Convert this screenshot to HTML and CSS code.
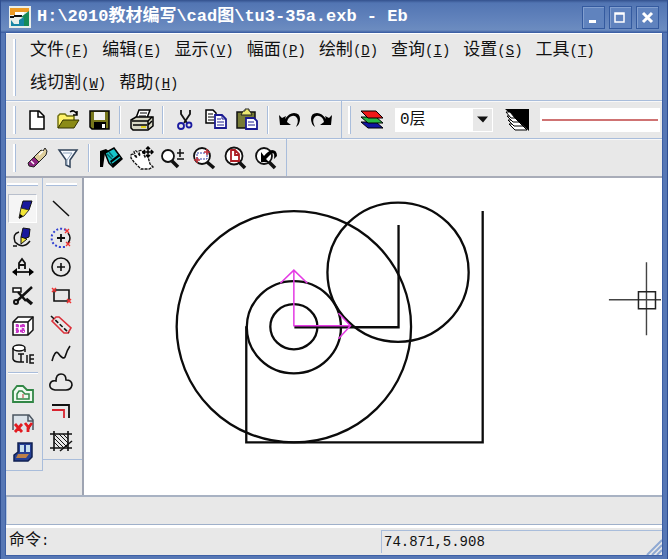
FILE: index.html
```html
<!DOCTYPE html>
<html lang="zh-CN">
<head>
<meta charset="utf-8">
<meta name="viewport" content="width=device-width, initial-scale=1">
<title>H:\2010教材编写\cad图\tu3-35a.exb - Eb</title>
<link rel="stylesheet" href="styles.css">
</head>
<body>
<div class="window">
  <header class="titlebar">
    <svg class="app-icon" viewBox="0 0 22 22" aria-hidden="true"><path fill="#e9eee9" d="M0 0h22v22H0z"/><path fill="#ed9b25" d="M1 2h19v4H6v3H1z"/><path fill="#fff" d="M6 6h9v4H6z"/><path fill="#111" d="M1 10h4v-1h8v2H5v1H1z"/><path fill="#1685a5" d="M2 14l3 4h5v-4l5-3v9H2z"/><path fill="#178b58" d="M12 11l8-6v15h-5v-8z"/></svg>
    <h1>H:\2010教材编写\cad图\tu3-35a.exb - Eb</h1>
    <div class="window-controls">
      <button type="button" aria-label="最小化"><svg viewBox="0 0 20 20"><path d="M6 13h7v3H6z" fill="#fff"/></svg></button>
      <button type="button" aria-label="最大化"><svg viewBox="0 0 20 20"><path d="M5 6h9v9H5zM5 7h9" fill="none" stroke="#fff" stroke-width="1.500"/></svg></button>
      <button type="button" aria-label="关闭"><svg viewBox="0 0 20 20"><path d="M6 6l9 9M15 6l-9 9" stroke="#fff" stroke-width="3"/></svg></button>
    </div>
  </header>

  <div class="content">
    <nav class="menubar" aria-label="菜单">
      <span class="grip"></span>
      <div class="menu-items">
        <button type="button">文件<span class="key">(<u>F</u>)</span></button>
        <button type="button">编辑<span class="key">(<u>E</u>)</span></button>
        <button type="button">显示<span class="key">(<u>V</u>)</span></button>
        <button type="button">幅面<span class="key">(<u>P</u>)</span></button>
        <button type="button">绘制<span class="key">(<u>D</u>)</span></button>
        <button type="button">查询<span class="key">(<u>I</u>)</span></button>
        <button type="button">设置<span class="key">(<u>S</u>)</span></button>
        <button type="button">工具<span class="key">(<u>T</u>)</span></button>
        <button type="button">线切割<span class="key">(<u>W</u>)</span></button>
        <button type="button">帮助<span class="key">(<u>H</u>)</span></button>
      </div>
    </nav>

    <div class="toolbar-row">
      <div class="toolbar">
        <span class="grip"></span>
        <button type="button" aria-label="新建"><svg viewBox="0 0 24 24"><path d="M5 3h9l5 5v13H5z" fill="#fff" stroke="#000" stroke-width="1.500"/><path d="M13 3v6h6" fill="none" stroke="#000" stroke-width="1.500"/></svg></button>
        <button type="button" aria-label="打开"><svg viewBox="0 0 24 24"><path d="M2 20V8l2-2h5l2 2h7v4" fill="#fff36a" stroke="#6e6e10" stroke-width="1.500"/><path d="M2 20l5-8h16l-5 8z" fill="#8b8b16" stroke="#333300"/><path d="M14 4q4-3 7 2M21 3v4h-4" fill="none" stroke="#000" stroke-width="1.500"/></svg></button>
        <button type="button" aria-label="保存"><svg viewBox="0 0 24 24"><path d="M3 3h19v18H5l-2-2z" fill="#77771c" stroke="#000" stroke-width="1.500"/><path d="M7 4h11v8H7z" fill="#f1f1f1"/><path d="M7 14h12v7H7z" fill="#000"/><path d="M15 16h3v4h-3z" fill="#fff"/></svg></button>
        <span class="separator"></span>
        <button type="button" aria-label="打印"><svg viewBox="0 0 24 24"><path d="M6 10l3-8h11l-3 8z" fill="#fff" stroke="#000" stroke-width="1.500"/><path d="M10 5h7M9 8h7" stroke="#000"/><path d="M1 12l5-3h17v9l-5 4H3l-2-2z" fill="#d6d6c4" stroke="#000" stroke-width="1.500"/><path d="M2 13h16v8M3 17h14M18 13l4-4M18 17l4-4" fill="none" stroke="#000" stroke-width="1.500"/><path d="M11 18h5v2h-5z" fill="#e0d020"/></svg></button>
        <span class="separator"></span>
        <button type="button" aria-label="剪切"><svg viewBox="0 0 24 24"><path d="M8 2v4l6 9M17 2v4l-6 9" fill="none" stroke="#111" stroke-width="1.800"/><circle cx="8" cy="18" r="3" fill="none" stroke="#1b1ba0" stroke-width="1.800"/><circle cx="16" cy="17" r="2.500" fill="none" stroke="#1b1ba0" stroke-width="1.800"/></svg></button>
        <button type="button" aria-label="复制"><svg viewBox="0 0 24 24"><path d="M2 2h7l3 3v10H2z" fill="#fff" stroke="#000" stroke-width="1.500"/><path d="M4 6h5M4 9h6M4 12h6" stroke="#000"/><path d="M11 7h7l4 4v9H11z" fill="#fff" stroke="#1a1a91" stroke-width="1.800"/><path d="M18 7v4h4M13 11h4M13 14h7M13 17h7" fill="none" stroke="#1a1a91"/></svg></button>
        <button type="button" aria-label="粘贴"><svg viewBox="0 0 24 24"><path d="M2 4h18v16H2z" fill="#777b36" stroke="#111" stroke-width="1.500"/><path d="M6 7l2-4h2V1h4v2h1l2 4z" fill="#ece973" stroke="#222"/><path d="M11 10h8l3 3v8H11z" fill="#fff" stroke="#1a1a91" stroke-width="1.800"/><path d="M13 14h6M13 17h7" stroke="#1a1a91"/></svg></button>
        <span class="separator"></span>
        <button type="button" aria-label="撤销"><svg viewBox="0 0 24 24"><path d="M1 7l3 3 4-2-1 3q4-6 9-6 6 0 6 6 0 5-4 8 3-6 1-9-2-3-5-2-4 1-5 6l4 3H2z"/></svg></button>
        <button type="button" aria-label="重做"><svg viewBox="0 0 24 24"><path d="M23 7l-3 3-4-2 1 3q-4-6-9-6-6 0-6 6 0 5 4 8-3-6-1-9 2-3 5-2 4 1 5 6l-4 3h11z"/></svg></button>
      </div>
      <div class="toolbar toolbar-layer">
        <span class="grip"></span>
        <button type="button" aria-label="层控制"><svg viewBox="0 0 24 24"><path d="M1 14h15l7 6H8z" fill="#1115a0" stroke="#000"/><path d="M1 9h15l7 6H8z" fill="#28b944" stroke="#000"/><path d="M1 3h15l7 7H8z" fill="#ef1919" stroke="#000"/></svg></button>
        <div class="layer-picker"><select aria-label="图层"><option>0层</option></select></div>
        <button type="button" class="linetype-button" aria-label="线型设置"><svg viewBox="0 0 24 24"><path d="M0 1h24v22z"/><g fill="#fff" stroke="#000"><path d="M4 16h12l6 6H10z"/><path d="M3 12h9l6 6H9z"/><path d="M2 8h6l6 6H8z"/><path d="M1 4h4l5 6H6z"/></g></svg></button>
        <button type="button" class="line-sample" aria-label="当前线型"><span></span></button>
      </div>
    </div>

    <div class="toolbar-row view-row">
      <div class="toolbar">
        <span class="grip"></span>
        <button type="button" aria-label="擦除"><svg viewBox="0 0 24 24"><path d="M9 11l7-7 2 1 2-3 2 3-1 4-7 7z" fill="#dfcf9c" stroke="#222"/><path d="M9 11l5 5-5 5-5-1-1-3z" fill="#8b247f" stroke="#222"/><path d="M6 15l3 3M14 9l4-4" stroke="#fff" stroke-width="1.500"/></svg></button>
        <button type="button" aria-label="过滤"><svg viewBox="0 0 24 24"><path d="M3 4h18l-7 10v7l-4-2v-5z" fill="#f7faff" stroke="#31435a" stroke-width="1.500"/><path d="M7 7h9l-5 7v5" fill="none" stroke="#8da3bc"/></svg></button>
        <span class="separator"></span>
        <button type="button" aria-label="重画"><svg viewBox="0 0 24 24"><path d="M1 5l6-2 4 3-5 1-2 14H1z"/><path d="M6 7l9-5 8 11-9 8-4-4z" fill="#16c5ca" stroke="#000" stroke-width="1.500"/><path d="M11 15l9-7 3 5-9 8z"/><path d="M13 17l8-6" stroke="#16c5ca" stroke-width="1.500"/><path d="M10 6l4 5M8 8l5 5" stroke="#05646a" stroke-width="1.500"/></svg></button>
        <button type="button" aria-label="平移"><svg viewBox="0 0 24 24"><path d="M1 9q2-2 4 1l2 2-3-6q1-3 4 1l2 3-1-5q3-2 4 2l2 4q2-3 3 0l2 7 3 3-4 2H11l-7-7-3-4z" fill="#fff" stroke="#111" stroke-width="1.300" stroke-dasharray="3 1"/><path d="M18 1v10M13 6h10M16 3l2-2 2 2M16 9l2 2 2-2M15 4l-2 2 2 2M21 4l2 2-2 2" fill="none" stroke="#000" stroke-width="1.500"/></svg></button>
        <button type="button" aria-label="缩放"><svg viewBox="0 0 24 24"><circle cx="7" cy="10" r="6" fill="#fff" stroke="#111" stroke-width="1.800"/><path d="M11 15l6 6" stroke="#111" stroke-width="3.500"/><path d="M16 7h7M19 3v8M16 13h7" stroke="#111" stroke-width="1.500"/></svg></button>
        <button type="button" aria-label="窗口缩放"><svg viewBox="0 0 24 24"><circle cx="10" cy="10" r="8" fill="#fff" stroke="#111" stroke-width="1.800"/><path d="M15 16l7 6" stroke="#111" stroke-width="3.500"/><path d="M5 13V7h10v6z" fill="none" stroke="#3544a9" stroke-dasharray="2 1"/><path d="M12 6h6M15 3v6M2 14h6M5 11v6" stroke="#c3353e" stroke-width="1.500"/></svg></button>
        <button type="button" aria-label="页面缩放"><svg viewBox="0 0 24 24"><circle cx="11" cy="10" r="8.500" fill="#fff" stroke="#111" stroke-width="1.800"/><path d="M16 16l6 6" stroke="#111" stroke-width="3.500"/><path d="M8 4h4l4 4v7H8zM12 4v5h4" fill="none" stroke="#ad1e25" stroke-width="1.800"/></svg></button>
        <button type="button" aria-label="恢复视图"><svg viewBox="0 0 24 24"><circle cx="10" cy="10" r="8" fill="#fff" stroke="#111" stroke-width="1.800"/><path d="M15 16l6 6" stroke="#111" stroke-width="3.500"/><path d="M7 6v10h8l-3-3 6-6q3-1 2 6l3-3q0-6-5-6-4 1-8 6z"/></svg></button>
      </div>
    </div>

    <main class="workspace">
      <aside class="tool-columns">
        <div class="tool-column">
          <span class="grip-h"></span>
          <button type="button" class="pressed" aria-label="基本曲线"><svg viewBox="0 0 24 24"><path d="M12 4h9l-3 9-8-2z" fill="#18189c" stroke="#111"/><path d="M10 11l8 2-5 6-5 2z" fill="#f2e634" stroke="#333"/><path d="M9 17l3 2-4 3z"/></svg></button>
          <button type="button" aria-label="高级曲线"><svg viewBox="0 0 24 24"><path d="M8 6q-7 2-4 10 8 8 15-1M2 20h4" fill="none" stroke="#111" stroke-width="1.500"/><path d="M12 2l7 1-1 8-6 2-2-2z" fill="#18189c" stroke="#111"/><path d="M10 11l6 2-6 5z" fill="#f2e634" stroke="#111"/></svg></button>
          <button type="button" aria-label="工程标注"><svg viewBox="0 0 24 24"><path d="M8 14V8l3-4 3 4v6M8 10h6" fill="none" stroke="#111" stroke-width="1.800"/><path d="M2 17h20" stroke="#111" stroke-width="1.800"/><path d="M1 17l5-4v8zM23 17l-5-4v8z"/></svg></button>
          <button type="button" aria-label="曲线编辑"><svg viewBox="0 0 24 24"><path d="M2 4h8v4H2z" fill="#fff" stroke="#111" stroke-width="1.500"/><path d="M7 8l8 9M21 3L6 17" stroke="#111" stroke-width="2.500"/><circle cx="5" cy="18" r="2" fill="none" stroke="#111" stroke-width="2"/><path d="M15 15l6 5" stroke="#111" stroke-width="3.500"/></svg></button>
          <button type="button" aria-label="块操作"><svg viewBox="0 0 24 24"><path d="M2 9l5-5h15v13l-5 5H2z" fill="#fff" stroke="#111" stroke-width="1.500"/><path d="M2 9h15v13M17 9l5-5" fill="none" stroke="#111" stroke-width="1.500"/><path d="M5 13h9M5 18h9M6 11v9M12 11v9" stroke="#ca38ca" stroke-width="2.500" stroke-dasharray="3 1"/></svg></button>
          <button type="button" aria-label="库操作"><svg viewBox="0 0 24 24"><ellipse cx="8" cy="6" rx="6" ry="3" fill="#fff" stroke="#111" stroke-width="1.500"/><path d="M2 6v11q1 3 6 3M14 7v3M7 12h6M10 12v8M7 20h6M16 13v8M23 13h-4v8h4M19 17h4" fill="none" stroke="#111" stroke-width="1.500"/></svg></button>
          <span class="separator-h"></span>
          <button type="button" aria-label="轨迹生成"><svg viewBox="0 0 24 24"><path d="M2 20V9l4-5h6l4 4h6v12z" fill="#effaf0" stroke="#328746" stroke-width="1.800"/><path d="M6 17v-5l2-3h3l3 3h4v5z" fill="none" stroke="#328746" stroke-width="1.500"/><path d="M12 12v4" stroke="#b33"/></svg></button>
          <button type="button" aria-label="代码生成"><svg viewBox="0 0 24 24"><path d="M2 4h16l4 5v10H2z" fill="#dbe3ea"/><path d="M2 19V4h16l4 5v10M17 4v6h5" fill="none" stroke="#4b5560" stroke-width="1.500"/><path d="M4 13l7 8M11 13l-7 8M14 12l4 5M21 12l-4 5v4" stroke="#e21b21" stroke-width="2.800"/></svg></button>
          <button type="button" aria-label="传输与后置"><svg viewBox="0 0 24 24"><path d="M7 3h14v14l-4 4H3v-6l4-3z" fill="#254096" stroke="#102051" stroke-width="1.500"/><path d="M9 5h4v7H9zM15 5h4v7h-4z" fill="#c7e0ed"/><path d="M7 14h11l-3 4H5z" fill="#bb8049"/></svg></button>
        </div>
        <div class="tool-column tool-column-draw">
          <span class="grip-h"></span>
          <button type="button" aria-label="直线"><svg viewBox="0 0 24 24"><path d="M4 4l16 15" stroke="#111" stroke-width="1.500"/></svg></button>
          <button type="button" aria-label="圆弧"><svg viewBox="0 0 24 24"><path d="M17 4Q8 0 3 9q-2 10 8 12h6" fill="none" stroke="#3140d1" stroke-width="2" stroke-dasharray="2 2"/><path d="M19 7q4 5 0 10" fill="none" stroke="#111" stroke-width="1.500"/><path d="M8 12h8M12 8v8" stroke="#111" stroke-width="1.800"/><path d="M16 3l4 4M20 3l-4 4M17 16l4 4M21 16l-4 4" stroke="#e33" stroke-width="1.300"/></svg></button>
          <button type="button" aria-label="圆"><svg viewBox="0 0 24 24"><circle cx="12" cy="12" r="9" fill="none" stroke="#111" stroke-width="1.600"/><path d="M8 12h8M12 8v8" stroke="#111" stroke-width="1.600"/></svg></button>
          <button type="button" aria-label="矩形"><svg viewBox="0 0 24 24"><path d="M5 6h15v11H5z" fill="none" stroke="#111" stroke-width="1.600"/><path d="M3 4l4 4M7 4L3 8M18 15l4 4M22 15l-4 4" stroke="#e33" stroke-width="1.500"/></svg></button>
          <button type="button" aria-label="等距线"><svg viewBox="0 0 24 24"><path d="M3 8l4-4h3l12 11-3 5h-4z" fill="none" stroke="#db303a" stroke-width="1.600"/><path d="M2 3l18 17" stroke="#111" stroke-width="1.600" stroke-dasharray="4 2"/></svg></button>
          <button type="button" aria-label="样条"><svg viewBox="0 0 24 24"><path d="M3 19q3-11 6-8 5 7 7 4 2-7 5-11" fill="none" stroke="#111" stroke-width="1.600"/></svg></button>
          <button type="button" aria-label="云线"><svg viewBox="0 0 24 24"><path d="M6 19q-6-1-5-6 1-4 6-3 0-7 5-7t5 6q6 0 6 5-1 5-6 5z" fill="none" stroke="#111" stroke-width="1.600"/></svg></button>
          <button type="button" aria-label="偏移"><svg viewBox="0 0 24 24"><path d="M3 5h17v13" fill="none" stroke="#111" stroke-width="1.800"/><path d="M3 10h12v8" fill="none" stroke="#d8242f" stroke-width="1.800"/></svg></button>
          <button type="button" aria-label="剖面线"><svg viewBox="0 0 24 24"><path d="M1 5h22M1 19h22M5 2v20M19 2v20" stroke="#111" stroke-width="1.600"/><path d="M5 13l6 6M5 9l10 10M6 6l13 13M10 5l9 9M14 5l5 5" stroke="#111"/><path d="M11 22l12-10" stroke="#111" stroke-width="1.500"/></svg></button>
        </div>
      </aside>
      <section class="canvas" aria-label="绘图区">
        <svg viewBox="84 178 577 316" preserveAspectRatio="xMinYMin meet">
          <g fill="none" stroke="#0b0b0b" stroke-width="2.300">
            <ellipse cx="293.500" cy="326.500" rx="117" ry="115.500"/>
            <ellipse cx="293.500" cy="327" rx="47" ry="46"/>
            <ellipse cx="293.500" cy="326.500" rx="23.500" ry="22.500"/>
            <ellipse cx="397.500" cy="272" rx="70.500" ry="69.500"/>
            <path d="M246 326v116h236V211M398 225v102H294"/>
          </g>
          <path d="M293.500 326V270M280 283l13.500-13 13.500 13M293 325.500h57M338 313l12 12.500-12 13" fill="none" stroke="#e43be4" stroke-width="1.500"/>
          <path d="M608 299.500h52M645.500 262v73" stroke="#444" stroke-width="1.400"/>
          <path d="M637.500 291.500h17v17h-17z" fill="none" stroke="#222" stroke-width="1.500"/>
        </svg>
      </section>
    </main>

    <div class="message-strip"></div>
    <footer class="statusbar">
      <label for="command">命令<span class="key">:</span></label>
      <input id="command" type="text" autocomplete="off">
      <output class="coordinates">74.871,5.908</output>
      <svg class="resize-handle" viewBox="0 0 16 16" aria-hidden="true"><path d="M1 16L16 1M6 16L16 6M11 16l5-5" stroke="#8fa9d3" stroke-width="2"/></svg>
    </footer>
  </div>
</div>
</body>
</html>
```
FILE: styles.css
```css
:root {
  --face: #e8e8e8;
  --edge: #a9bddb;
  --frame: #5677b5;
  --frame-dark: #2f4f91;
}

* { box-sizing: border-box; }

body {
  margin: 0;
  color: #111;
  font-family: "Liberation Mono", "Noto Sans CJK SC", monospace;
  font-size: 14px;
}

button, input, select {
  margin: 0;
  padding: 0;
  border: 0;
  background: transparent;
  color: inherit;
  font: inherit;
}

svg { display: block; }

.window {
  display: flex;
  flex-direction: column;
  min-height: 100vh;
  padding: 0 5px 4px;
  background: var(--frame);
  border: solid var(--frame-dark);
  border-width: 0 1px 1px;
}

.titlebar {
  display: flex;
  align-items: center;
  height: 33px;
  margin: 0 -5px;
  padding: 1px 8px 0;
  background: linear-gradient(#33518d 0, #5275b3 3px, #6485bd 22px, #6c8cc0 30px, #34569c 33px);
  color: #fff;
}

.app-icon { width: 22px; height: 22px; }

.titlebar h1 {
  flex: 1;
  margin: 0 0 0 6px;
  font-size: 17px;
  line-height: 24px;
  font-weight: 700;
  white-space: pre;
}

.window-controls { display: flex; gap: 4px; }

.window-controls button {
  width: 23px;
  height: 23px;
  border: 1px solid #345a9f;
  background: #6083be;
  box-shadow: inset 1px 1px #829fcf;
}

.window-controls svg { width: 20px; height: 20px; }

.content {
  display: flex;
  flex: 1;
  flex-direction: column;
  background: var(--face);
  box-shadow: 0 0 0 1px #3d60a5;
}

.menubar {
  display: flex;
  padding-left: 7px;
  border-top: 1px solid #fff;
}

.grip {
  flex: none;
  width: 3px;
  margin: 5px 7px 4px 0;
  background: #fff;
  border-right: 1px solid var(--edge);
}

.menu-items {
  display: flex;
  flex: 1;
  flex-wrap: wrap;
  column-gap: 13px;
  padding-left: 7px;
}

.menu-items button {
  height: 33px;
  line-height: 32px;
  font-size: 17px;
}

.key { font-size: 14px; }

.toolbar-row {
  display: flex;
  height: 38px;
  border-top: 1px solid var(--edge);
  box-shadow: inset 0 1px #f8f8f8;
}

.view-row { height: 40px; border-bottom: 2px solid #a8acb8; }

.toolbar {
  display: flex;
  align-items: center;
  padding: 0 5px 0 7px;
  border-right: 1px solid var(--edge);
}

.toolbar .grip { align-self: stretch; margin-right: 5px; }

.toolbar button {
  display: grid;
  place-items: center;
  width: 31px;
  height: 31px;
}

.toolbar button svg,
.tool-column svg { width: 24px; height: 24px; }

.separator {
  width: 2px;
  height: 28px;
  margin: 0 5px;
  background: var(--edge);
  border-right: 1px solid #fff;
}

.toolbar-layer { flex: 1; padding: 0 2px 0 6px; border: 0; }

.layer-picker {
  position: relative;
  width: 98px;
  height: 24px;
  margin-left: 8px;
  background: #fff;
}

.layer-picker select {
  width: 100%;
  height: 100%;
  padding-left: 5px;
  appearance: none;
  font-size: 16px;
}

.layer-picker::after {
  position: absolute;
  inset: 2px 1px 2px auto;
  width: 19px;
  background: #111;
  clip-path: polygon(4px 7px, 15px 7px, 10px 13px);
  content: "";
  pointer-events: none;
}

.layer-picker::before {
  position: absolute;
  inset: 1px 1px 1px auto;
  width: 19px;
  background: var(--face);
  content: "";
  pointer-events: none;
}

.toolbar .linetype-button { margin-left: 8px; }

.toolbar .line-sample {
  flex: 1;
  height: 24px;
  margin-left: 8px;
  padding: 0 2px;
  background: #fff;
}

.line-sample span { width: 100%; height: 2px; background: #cf7373; }

.workspace { display: flex; flex: 1; min-height: 316px; }

.tool-columns {
  display: flex;
  align-items: flex-start;
  width: 78px;
  border-right: 2px solid #9ea4b2;
}

.tool-column {
  display: flex;
  flex-direction: column;
  align-items: center;
  width: 37px;
  padding: 5px 3px 4px 0;
  border: solid var(--edge);
  border-width: 0 1px 1px 0;
}

.tool-column-draw { width: 39px; border-right: 0; }

.grip-h {
  width: 31px;
  height: 3px;
  margin-bottom: 8px;
  background: #fff;
  border-bottom: 1px solid var(--edge);
}

.tool-column button {
  display: grid;
  place-items: center;
  width: 29px;
  height: 29px;
}

.tool-column .pressed {
  background: #f5f5f5;
  border: 1px solid;
  border-color: #b8bfcc #fff #fff #b8bfcc;
}

.separator-h {
  width: 30px;
  height: 2px;
  margin: 4px 0 5px;
  background: var(--edge);
  border-bottom: 1px solid #fff;
}

.canvas { flex: 1; min-width: 0; background: #fff; }
.canvas svg { width: 100%; height: auto; }

.message-strip {
  height: 33px;
  border: solid #fff;
  border-width: 0 0 3px;
  box-shadow: inset 0 2px #a8b2c3, inset 0 -1px #9fb0ca, inset 1px 0 #b4c6e0;
}

.statusbar {
  display: flex;
  align-items: center;
  height: 27px;
  padding-left: 3px;
}

.statusbar label { font-size: 16px; line-height: 24px; }

.statusbar input { flex: 1; min-width: 0; height: 22px; outline: 0; }

.coordinates {
  width: 281px;
  height: 23px;
  padding-left: 2px;
  border: solid var(--edge);
  border-width: 1px 0 0 1px;
  line-height: 22px;
}

.resize-handle { width: 16px; height: 16px; margin-left: -16px; align-self: flex-end; }
```
